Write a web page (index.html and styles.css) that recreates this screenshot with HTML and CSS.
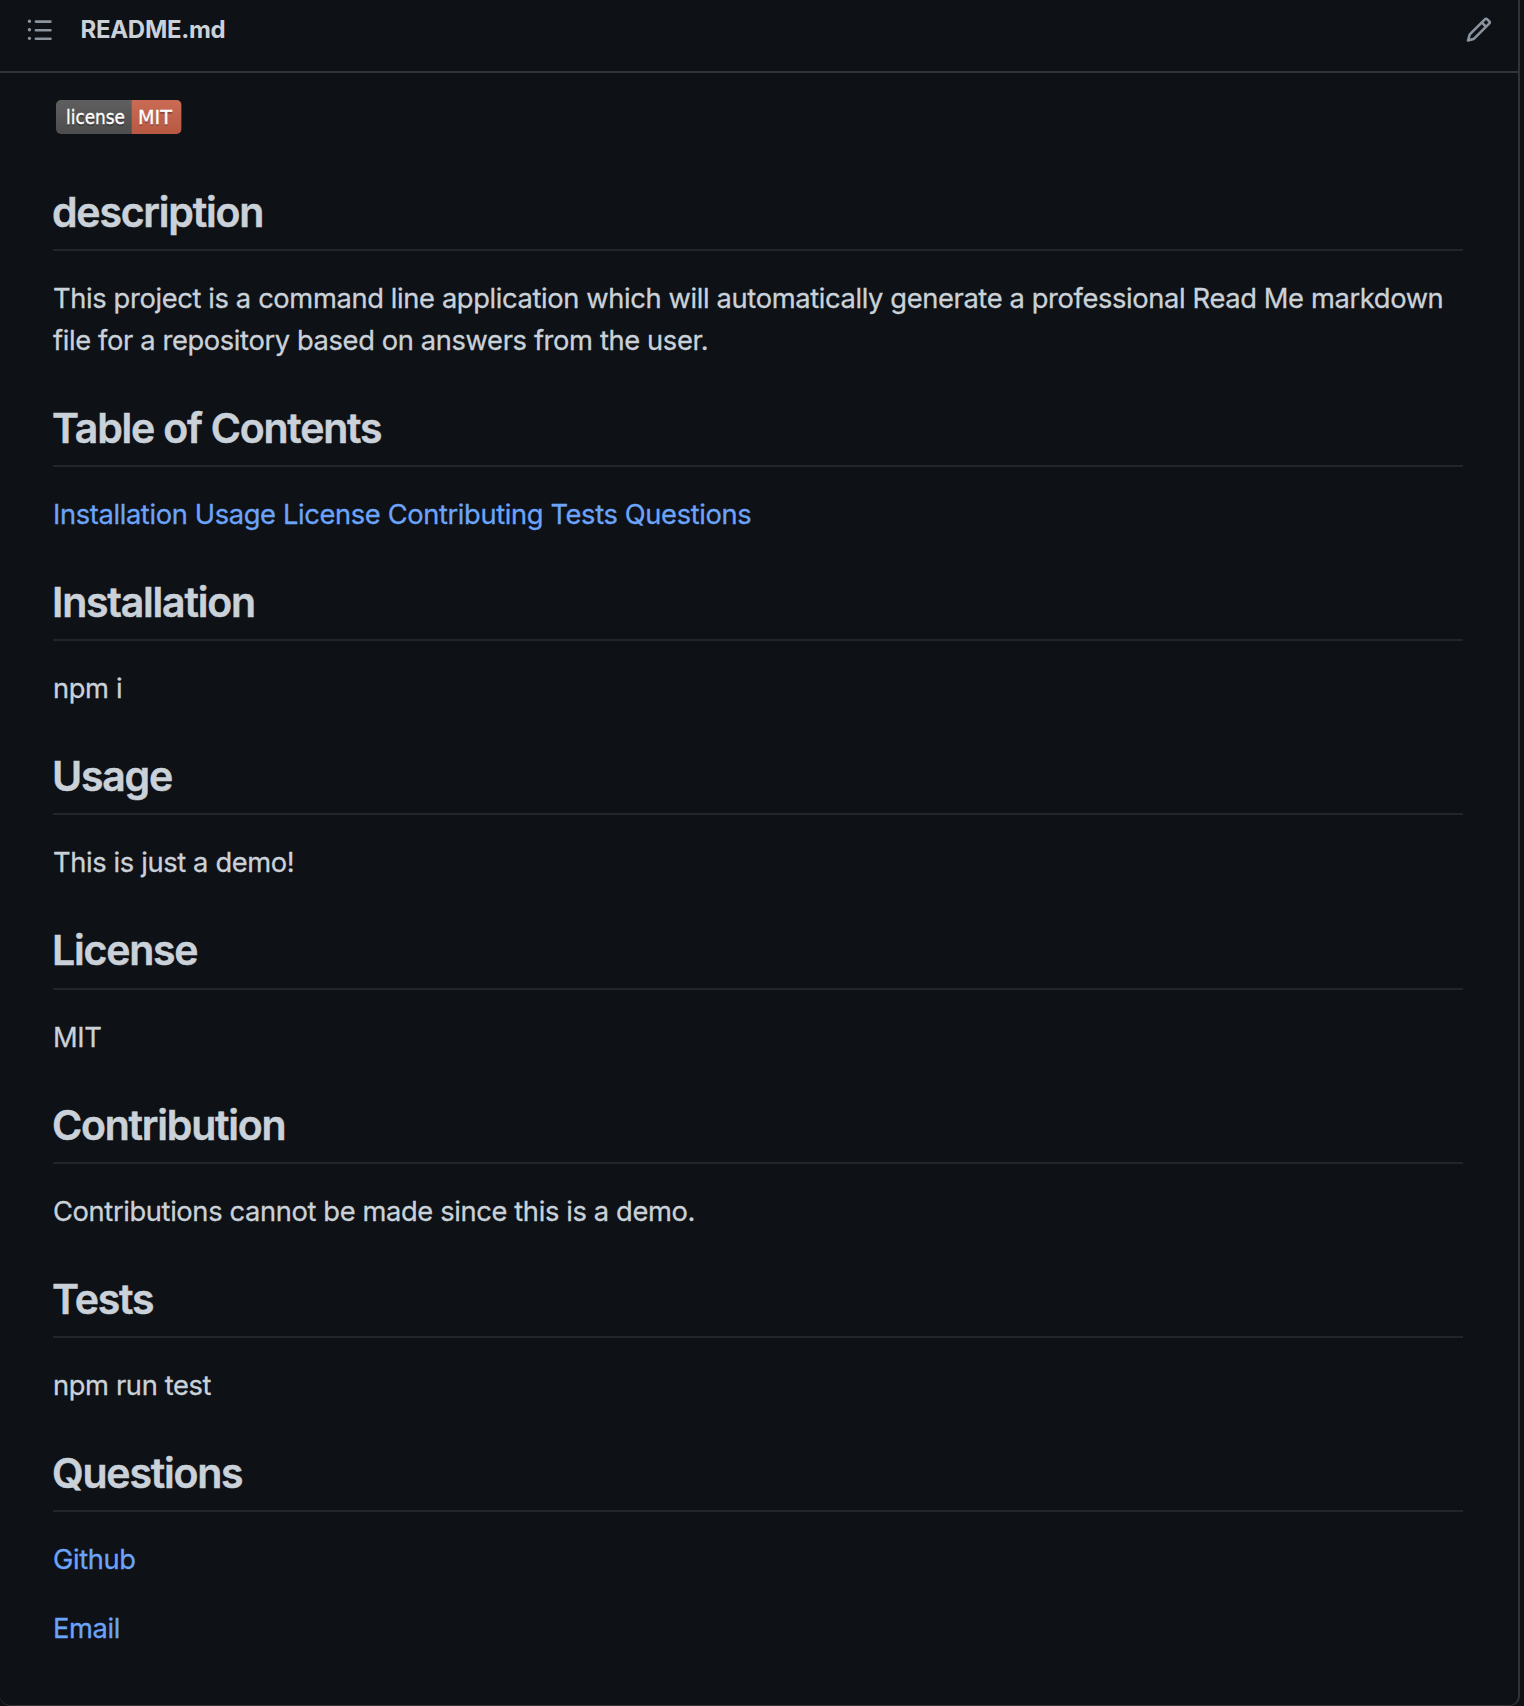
FILE: index.html
```html
<!DOCTYPE html>
<html lang="en">
<head>
<meta charset="utf-8">
<title>README.md</title>
<link rel="stylesheet" href="styles.css">
</head>
<body>
<main class="readme">
  <header class="bar">
    <svg class="icon" viewBox="0 0 16 16" aria-hidden="true"><path d="M2 4a1 1 0 1 0 0-2 1 1 0 0 0 0 2Zm3.75-1.5a.75.75 0 0 0 0 1.5h8.5a.75.75 0 0 0 0-1.5h-8.5Zm0 5a.75.75 0 0 0 0 1.5h8.5a.75.75 0 0 0 0-1.5h-8.5Zm0 5a.75.75 0 0 0 0 1.5h8.5a.75.75 0 0 0 0-1.5h-8.5ZM3 8a1 1 0 1 1-2 0 1 1 0 0 1 2 0Zm-1 6a1 1 0 1 0 0-2 1 1 0 0 0 0 2Z"/></svg>
    <span class="filename">README.md</span>
    <svg class="icon edit" viewBox="0 0 16 16" aria-hidden="true"><path d="M11.013 1.427a1.75 1.75 0 0 1 2.474 0l1.086 1.086a1.75 1.75 0 0 1 0 2.474l-8.61 8.61c-.21.21-.47.364-.756.445l-3.251.93a.75.75 0 0 1-.927-.928l.929-3.25a1.75 1.75 0 0 1 .445-.758l8.61-8.61Zm1.414 1.06a.25.25 0 0 0-.354 0L10.811 3.75l1.439 1.44 1.263-1.263a.25.25 0 0 0 0-.354l-1.086-1.086ZM11.189 6.25 9.75 4.81l-6.286 6.287a.25.25 0 0 0-.064.108l-.558 1.953 1.953-.558a.249.249 0 0 0 .108-.064l6.286-6.286Z"/></svg>
  </header>
  <article class="body">
    <svg class="badge" viewBox="0 0 126 34" role="img" aria-label="license: MIT">
      <defs>
        <linearGradient id="shine" x2="0" y2="1"><stop offset="0" stop-color="#bbb" stop-opacity=".1"/><stop offset="1" stop-opacity=".1"/></linearGradient>
        <clipPath id="round"><rect width="125.5" height="34" rx="5"/></clipPath>
      </defs>
      <g clip-path="url(#round)">
        <rect width="76" height="34" fill="#555"/>
        <rect x="75.7" width="50" height="34" fill="#cb624a"/>
        <rect width="126" height="34" fill="url(#shine)"/>
      </g>
      <g class="badge-shadow">
        <text x="10" y="25.5" textLength="59" lengthAdjust="spacingAndGlyphs">license</text>
        <text x="82" y="25.5" textLength="34" lengthAdjust="spacingAndGlyphs">MIT</text>
      </g>
      <g class="badge-text">
        <text x="10" y="23.8" textLength="59" lengthAdjust="spacingAndGlyphs">license</text>
        <text x="82" y="23.8" textLength="34" lengthAdjust="spacingAndGlyphs">MIT</text>
      </g>
    </svg>
    <h2>description</h2>
    <p>This project is a command line application which will automatically generate a professional Read Me markdown<br>file for a repository based on answers from the user.</p>
    <h2>Table of Contents</h2>
    <p><a>Installation</a> <a>Usage</a> <a>License</a> <a>Contributing</a> <a>Tests</a> <a>Questions</a></p>
    <h2>Installation</h2>
    <p>npm i</p>
    <h2>Usage</h2>
    <p>This is just a demo!</p>
    <h2>License</h2>
    <p>MIT</p>
    <h2>Contribution</h2>
    <p>Contributions cannot be made since this is a demo.</p>
    <h2>Tests</h2>
    <p>npm run test</p>
    <h2>Questions</h2>
    <p><a>Github</a></p>
    <p><a>Email</a></p>
  </article>
</main>
</body>
</html>
```
FILE: styles.css
```css
* { box-sizing: border-box; }

body {
  margin: 0;
  background: #0e1116;
  color: #cad1d9;
  font-family: Inter, "Liberation Sans", sans-serif;
  font-size: 27.3px;
  font-weight: 400;
  letter-spacing: -0.37px;
  line-height: 41.8px;
}

.readme {
  width: 1520px;
  height: 1706px;
  border: solid #30343a;
  border-width: 0 2px 1px 0;
  border-radius: 0 0 10px 10px;
}

.bar {
  display: flex;
  align-items: center;
  height: 73px;
  padding: 1px 26px 12px;
  border-bottom: 2px solid #30333a;
}

.icon {
  width: 27.5px;
  height: 27.5px;
  fill: #8b949e;
}

.edit { margin-left: auto; }

.filename {
  margin-left: 27px;
  font-size: 24px;
  font-weight: 650;
  letter-spacing: -0.3px;
}

.body { padding: 27px 55px 0 53px; }

.badge {
  display: block;
  width: 126px;
  height: 34px;
  margin-left: 3.3px;
}

.badge text {
  font-family: "DejaVu Sans", sans-serif;
  font-size: 18.7px;
  font-weight: 400;
  letter-spacing: 0;
}

.badge-shadow { fill: #010101; fill-opacity: .3; }
.badge-text { fill: #fff; stroke: #fff; stroke-width: .3px; }

h2 {
  height: 65.5px;
  margin: 51.5px 0 27px;
  padding-top: 1.3px;
  border-bottom: 2px solid #21262d;
  font-size: 41px;
  font-weight: 600;
  letter-spacing: -1.22px;
  line-height: 51px;
  text-indent: -1px;
  white-space: nowrap;
  -webkit-text-stroke: .5px currentColor;
}

p {
  margin: 0 0 27px;
  white-space: nowrap;
  -webkit-text-stroke: .3px currentColor;
}

p + h2 { margin-top: 39.9px; }

a { color: #6ba4f8; }
```
